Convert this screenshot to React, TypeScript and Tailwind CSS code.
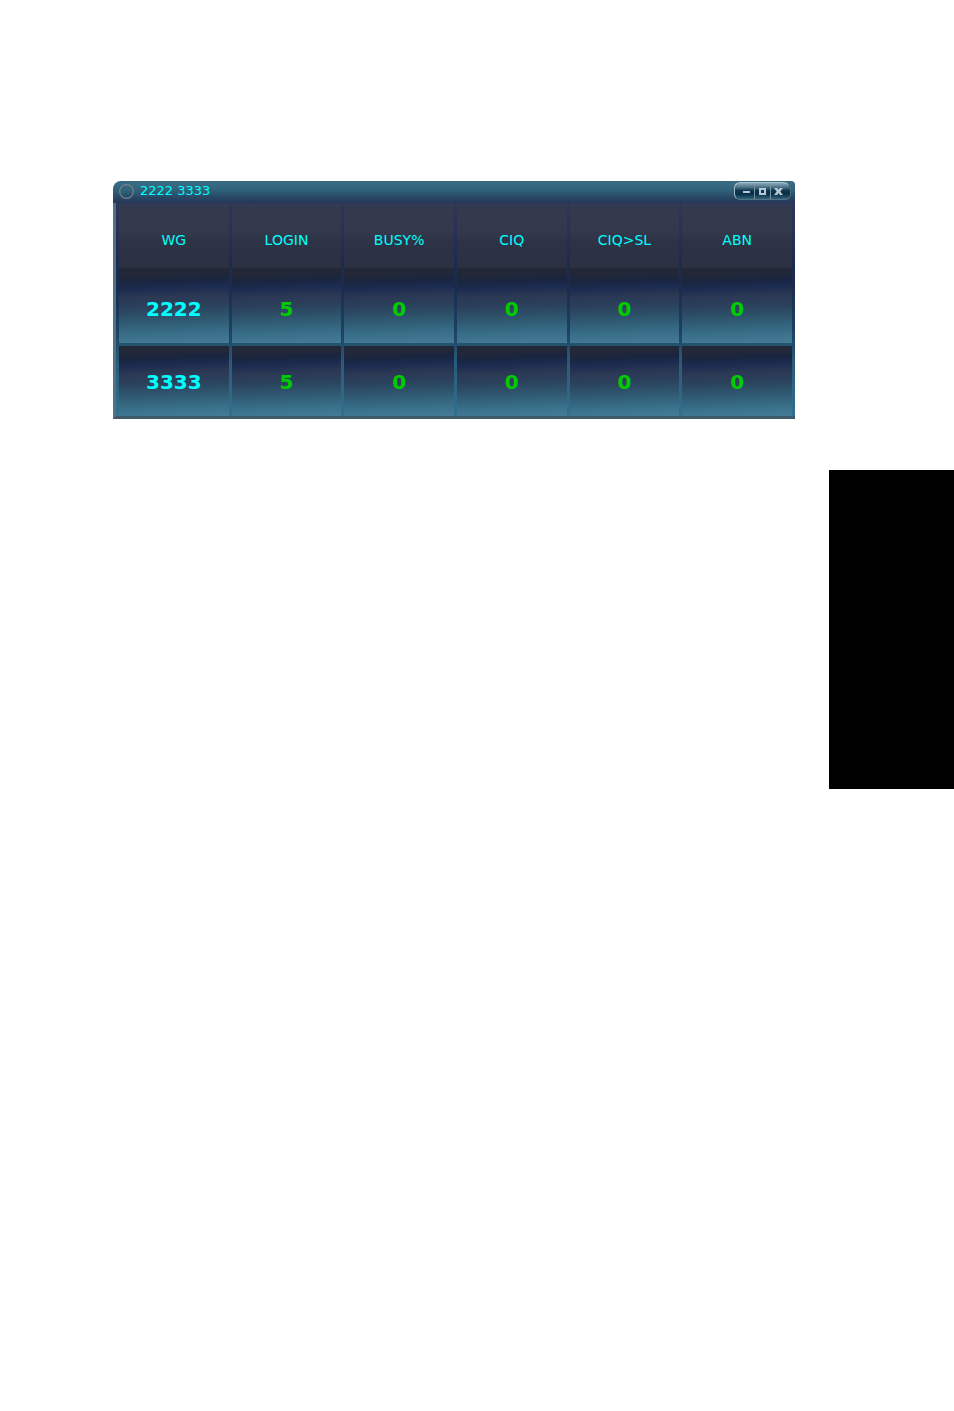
import React from 'react';

const COLUMNS = ['WG', 'LOGIN', 'BUSY%', 'CIQ', 'CIQ>SL', 'ABN'];

const ROWS = [
    { group: '2222', values: [5, 0, 0, 0, 0] },
    { group: '3333', values: [5, 0, 0, 0, 0] },
];

const CELL =
    'bg-[linear-gradient(178deg,#232837_0%,#222838_10%,#1a253f_18%,#1b2b50_27%,#2b3854_38%,#2b425d_52%,#2f5870_68%,#386e88_85%,#447b96_100%)] bg-clip-padding p-0 text-center align-middle text-xl leading-6 font-bold';

const CELL_TOP = 'border-b-[3px] border-b-[#25536c] pt-1.5';
const CELL_BOTTOM = 'pt-0.5';

const CONTROL = 'flex h-4 flex-1 items-center justify-center';

const TitleBar: React.FC = () => (
    <header className="flex h-[22px] items-center rounded-tl-lg rounded-tr-sm bg-[linear-gradient(#326a81_0%,#3a6b84_12%,#2e6078_45%,#284765_75%,#26365a_100%)] pr-1 pb-0.5 pl-1.5">
        <svg className="mr-1.5 h-[15px] w-[15px]" viewBox="0 0 15 15" fill="none" aria-hidden="true">
            <circle cx="7.5" cy="7.5" r="6.8" stroke="#77828a" strokeWidth="1.2" />
        </svg>
        <h1 className="flex-1 text-[13px] leading-5 text-[#00ffff]">2222 3333</h1>
        <div className="flex h-[18px] w-[57px] overflow-hidden rounded-md rounded-tr-lg border border-t-[#a8bec8] border-r-[#506c7b] border-b-[#547384] border-l-[#a8bec8] bg-[linear-gradient(#8aa8b7_0%,#4f7589_25%,#0d3550_48%,#093049_70%,#326579_100%)]">
            <button type="button" aria-label="Minimize" className={`${CONTROL} pl-1`}>
                <svg width="8" height="8" viewBox="0 0 8 8" aria-hidden="true">
                    <path d="M0 4h7v2H0z" fill="#b9c8d0" />
                </svg>
            </button>
            <button type="button" aria-label="Maximize" className={`${CONTROL} border-x border-[#7893a0]`}>
                <svg width="8" height="8" viewBox="0 0 8 8" aria-hidden="true">
                    <path d="M0 1h7v7H0zM2 3v3h3V3z" fill="#b9c8d0" fillRule="evenodd" />
                </svg>
            </button>
            <button type="button" aria-label="Close" className={`${CONTROL} pr-1`}>
                <svg width="10" height="8" viewBox="0 0 10 8" aria-hidden="true">
                    <path d="M0 1h3.2l1.3 1.7L5.8 1H9L6.3 4.4 9 8H5.8L4.5 6.1 3.2 8H0l2.7-3.6z" fill="#b9c8d0" />
                </svg>
            </button>
        </div>
    </header>
);

const StatsTable: React.FC = () => (
    <table className="w-full table-fixed border-separate border-spacing-x-[3px] border-spacing-y-0 bg-[linear-gradient(#2d3654_0%,#29315a_12%,#1c2a50_28%,#192c4e_40%,#1d4163_60%,#285c78_75%,#31708f_100%)]">
        <thead>
            <tr className="h-[65px]">
                {COLUMNS.map((name) => (
                    <th
                        key={name}
                        scope="col"
                        className="bg-[linear-gradient(#303957_0%,#343a4d_8%,#34384c_45%,#2d3244_60%,#2b3042_100%)] p-0 pt-2 text-center align-middle text-sm leading-4 font-normal text-[#00ffff]"
                    >
                        {name}
                    </th>
                ))}
            </tr>
        </thead>
        <tbody>
            {ROWS.map((row, i) => (
                <tr key={row.group} className={i === 0 ? 'h-[78px]' : 'h-[70px]'}>
                    <th
                        scope="row"
                        className={`${CELL} text-[#00ffff] ${i === 0 ? CELL_TOP : CELL_BOTTOM}`}
                    >
                        {row.group}
                    </th>
                    {row.values.map((value, j) => (
                        <td
                            key={j}
                            className={`${CELL} text-[#00cc00] ${i === 0 ? CELL_TOP : CELL_BOTTOM}`}
                        >
                            {value}
                        </td>
                    ))}
                </tr>
            ))}
        </tbody>
    </table>
);

const App: React.FC = () => (
    <main className="flex flex-col bg-white pt-[181px] font-['DejaVu_Sans',sans-serif]">
        <section className="mr-[159px] ml-[113px]">
            <TitleBar />
            <div className="border-b-[3px] border-l-[3px] border-b-[#3e596a] border-l-[#537184]">
                <StatsTable />
            </div>
        </section>

        <div className="mt-[51px] h-[319px] w-[125px] self-end bg-black"></div>
    </main>
);

export default App;
